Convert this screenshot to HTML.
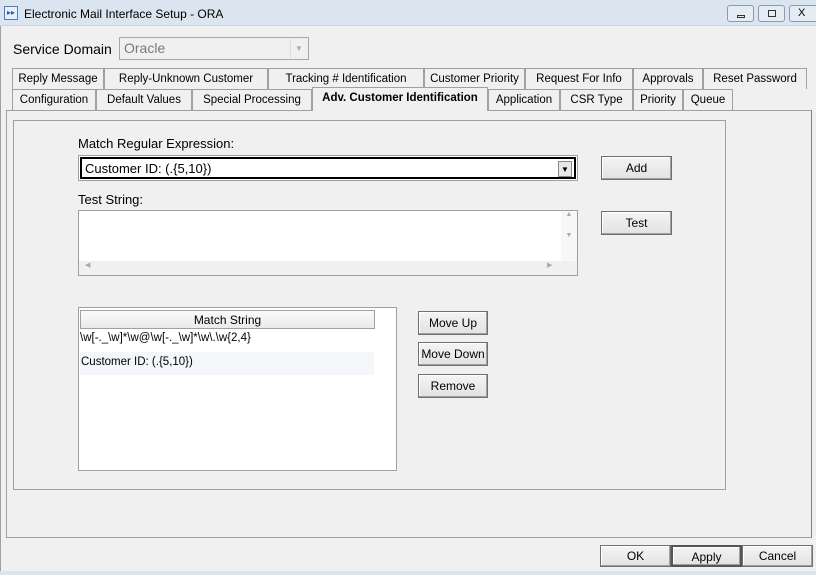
<!DOCTYPE html><html><head><style>
*{margin:0;padding:0;box-sizing:border-box}
body{width:816px;height:575px;background:#f0f0f0;font-family:"Liberation Sans",sans-serif;font-size:12px;color:#000;position:relative;overflow:hidden}
.a{position:absolute}
.tab{position:absolute;height:21px;border:1px solid #a0a0a0;border-bottom:none;background:#f0f0f0;text-align:center;line-height:20px;font-size:11.5px;white-space:nowrap}
.btn{position:absolute;border:1px solid #707070;background:linear-gradient(#f4f4f4,#e2e2e2);text-align:center;font-size:12px;box-shadow:inset -1px -1px #a0a0a0,inset 1px 1px #fff}
</style></head><body>
<div class="a" style="left:0;top:0;width:816px;height:26px;background:#dbe5f0;border-bottom:1px solid #c8d3df"></div>
<div class="a" style="left:4px;top:6px;width:14px;height:14px;border:1px solid #4a7fc0;background:#e8f0fa;font-size:8px;color:#2a5fa0;line-height:12px;text-align:center">▸▸</div>
<div class="a" style="left:24px;top:7px;font-size:12px">Electronic Mail Interface Setup - ORA</div>
<div class="a" style="left:727px;top:5px;width:27px;height:17px;border:1px solid #8a9ab0;border-radius:3px;background:#e6ecf3"><div class="a" style="left:9px;top:9px;width:8px;height:3px;border:1px solid #333"></div></div>
<div class="a" style="left:758px;top:5px;width:27px;height:17px;border:1px solid #8a9ab0;border-radius:3px;background:#e6ecf3"><div class="a" style="left:9px;top:4px;width:8px;height:7px;border:1px solid #333"></div></div>
<div class="a" style="left:789px;top:5px;width:30px;height:17px;border:1px solid #8a9ab0;border-radius:3px;background:#e6ecf3;font-size:11px;padding-left:8px;line-height:15px">X</div>
<div class="a" style="left:0;top:26px;width:1px;height:549px;background:#a0a0a0"></div>
<div class="a" style="left:13px;top:41px;font-size:14px">Service Domain</div>
<div class="a" style="left:119px;top:37px;width:190px;height:23px;border:1px solid #a8a8a8;background:#f0f0f0;color:#7a7a7a;font-size:14px;padding:2px 4px">Oracle<div class="a" style="right:1px;top:1px;width:17px;height:19px;border-left:1px solid #ddd;color:#aaa;font-size:8px;text-align:center;line-height:19px">▼</div></div>
<div class="tab" style="left:12px;top:68px;width:92px">Reply Message</div>
<div class="tab" style="left:104px;top:68px;width:164px">Reply-Unknown Customer</div>
<div class="tab" style="left:268px;top:68px;width:156px">Tracking # Identification</div>
<div class="tab" style="left:424px;top:68px;width:101px">Customer Priority</div>
<div class="tab" style="left:525px;top:68px;width:108px">Request For Info</div>
<div class="tab" style="left:633px;top:68px;width:70px">Approvals</div>
<div class="tab" style="left:703px;top:68px;width:104px">Reset Password</div>
<div class="tab" style="left:12px;top:89px;width:84px">Configuration</div>
<div class="tab" style="left:96px;top:89px;width:96px">Default Values</div>
<div class="tab" style="left:192px;top:89px;width:120px">Special Processing</div>
<div class="tab" style="left:312px;top:87px;width:176px;height:24px;font-weight:bold;z-index:2;border-bottom:none">Adv. Customer Identification</div>
<div class="tab" style="left:488px;top:89px;width:72px">Application</div>
<div class="tab" style="left:560px;top:89px;width:73px">CSR Type</div>
<div class="tab" style="left:633px;top:89px;width:50px">Priority</div>
<div class="tab" style="left:683px;top:89px;width:50px">Queue</div>
<div class="a" style="left:6px;top:110px;width:806px;height:428px;border:1px solid #a0a0a0;border-right-color:#808080"></div>
<div class="a" style="left:13px;top:120px;width:713px;height:370px;border:1px solid #a0a0a0"></div>
<div class="a" style="left:78px;top:136px;font-size:13px">Match Regular Expression:</div>
<div class="a" style="left:78px;top:155px;width:500px;height:26px;border:1px solid #a0a0a0;background:#fff;padding:1px"><div style="border:2px solid #000;height:22px;font-size:13px;padding:2px 3px">Customer ID: (.{5,10})</div><div class="a" style="left:479px;top:5px;width:14px;height:16px;font-size:8px;text-align:center;line-height:16px;border:1px solid #888;background:#e8e8e8">▼</div></div>
<div class="a" style="left:78px;top:192px;font-size:13px">Test String:</div>
<div class="a" style="left:78px;top:210px;width:500px;height:66px;border:1px solid #a0a0a0;background:#fff"><div class="a" style="left:482px;top:0;width:16px;height:50px;background:#f7f7f7;color:#aaa;font-size:7px;text-align:center">▲<br><br><br>▼</div><div class="a" style="left:0;top:50px;width:498px;height:14px;background:#f0f0f0;color:#aaa;font-size:7px;padding-left:6px">◀<span style="position:absolute;left:468px">▶</span></div></div>
<div class="btn" style="left:601px;top:156px;width:71px;height:24px;line-height:22px">Add</div>
<div class="btn" style="left:601px;top:211px;width:71px;height:24px;line-height:22px">Test</div>
<div class="a" style="left:78px;top:307px;width:319px;height:164px;border:1px solid #a0a0a0;background:#fff"></div>
<div class="a" style="left:80px;top:310px;width:295px;height:19px;border:1px solid #a0a0a0;background:linear-gradient(#fafafa,#eaeaea);text-align:center;line-height:18px">Match String</div>
<div class="a" style="left:80px;top:332px;width:295px;font-size:11.5px">\w[-._\w]*\w@\w[-._\w]*\w\.\w{2,4}</div>
<div class="a" style="left:80px;top:352px;width:294px;height:23px;background:#f4f6fa;font-size:11.5px;padding-left:1px;line-height:20px">Customer ID: (.{5,10})</div>
<div class="btn" style="left:418px;top:311px;width:70px;height:24px;line-height:22px">Move Up</div>
<div class="btn" style="left:418px;top:342px;width:70px;height:24px;line-height:22px">Move Down</div>
<div class="btn" style="left:418px;top:374px;width:70px;height:24px;line-height:22px">Remove</div>
<div class="btn" style="left:600px;top:545px;width:71px;height:22px;line-height:20px">OK</div>
<div class="btn" style="left:671px;top:545px;width:71px;height:22px;line-height:20px;border:2px solid #555">Apply</div>
<div class="btn" style="left:742px;top:545px;width:71px;height:22px;line-height:20px">Cancel</div>
<div class="a" style="left:0;top:571px;width:816px;height:4px;background:#dbe5f0"></div>
</body></html>
